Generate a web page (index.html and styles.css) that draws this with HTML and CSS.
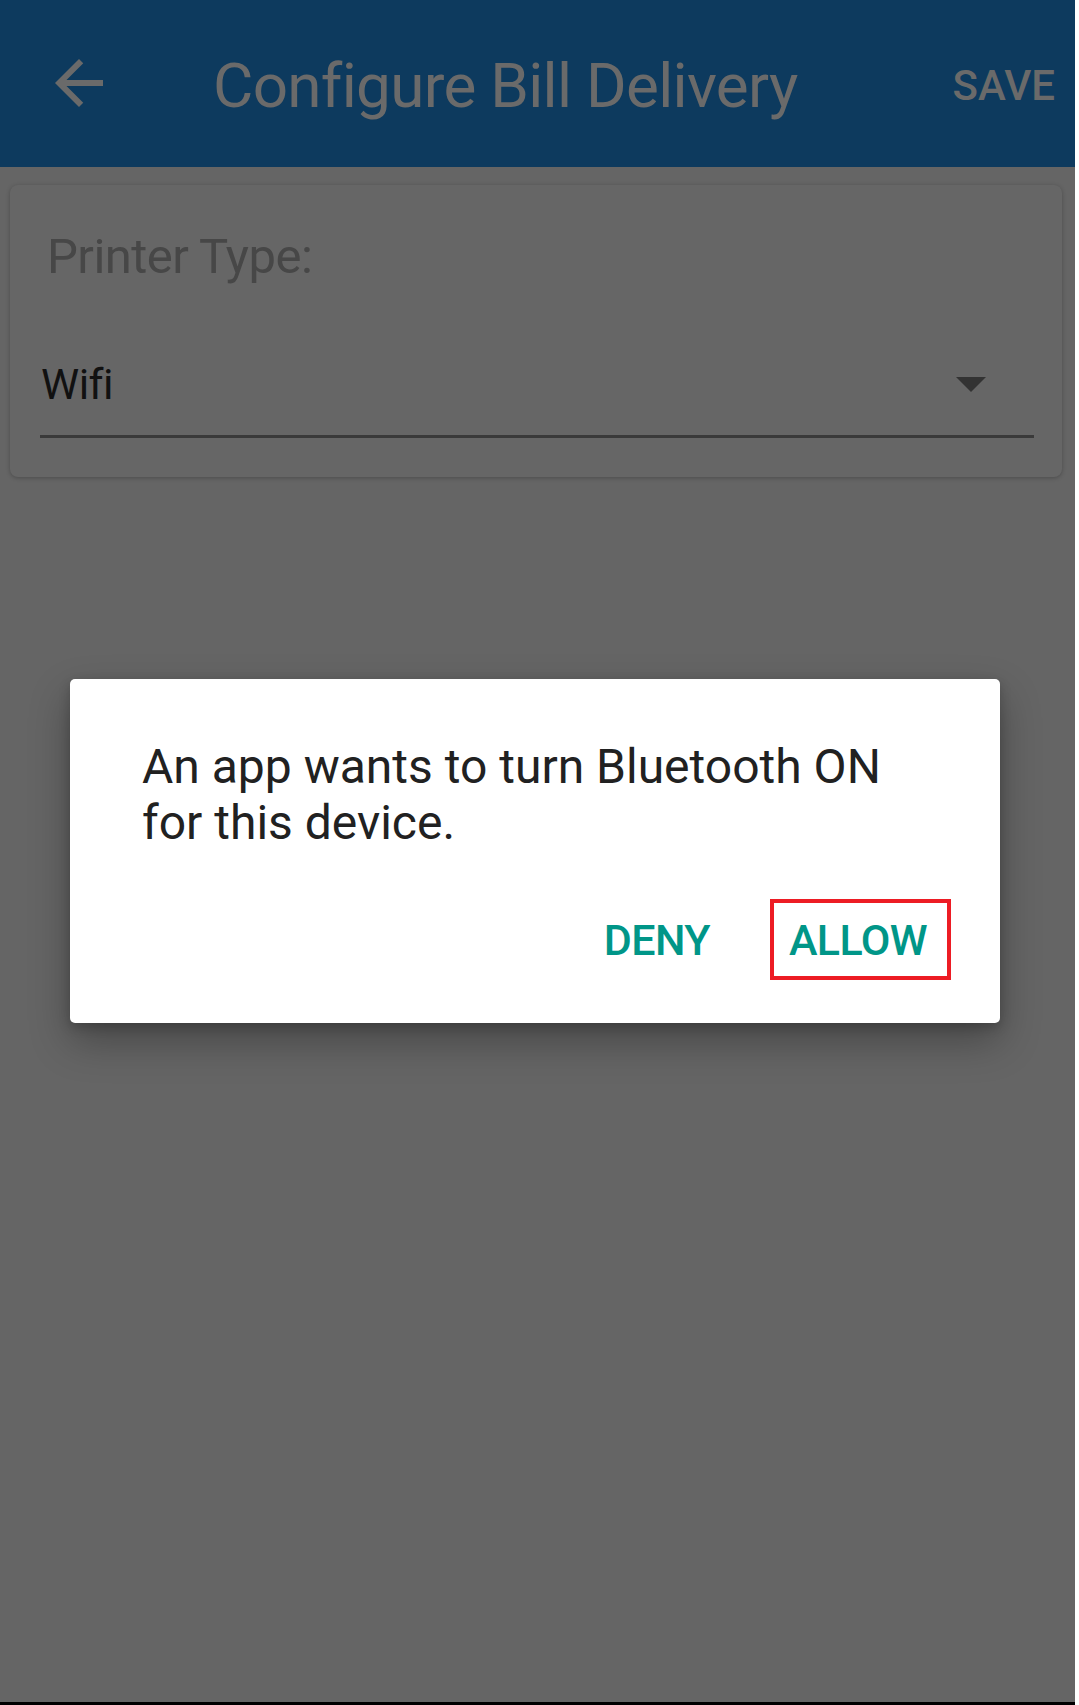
FILE: index.html
```html
<!DOCTYPE html>
<html lang="en">
<head>
<meta charset="utf-8">
<title>Configure Bill Delivery</title>
<link rel="stylesheet" href="styles.css">
</head>
<body>
<div class="screen">
  <header class="appbar">
    <svg class="back" viewBox="0 0 24 24" width="72" height="72" aria-hidden="true">
      <path d="M20 11H7.83l5.59-5.59L12 4l-8 8 8 8 1.41-1.41L7.83 13H20v-2z" fill="#6a6a6a"/>
    </svg>
    <h1 class="title">Configure Bill Delivery</h1>
    <span class="save">SAVE</span>
  </header>
  <main class="content">
    <section class="card">
      <div class="label">Printer Type:</div>
      <div class="select">
        <span class="value">Wifi</span>
        <span class="caret"></span>
      </div>
    </section>
  </main>
  <div class="dialog">
    <p class="message">An app wants to turn Bluetooth ON for this device.</p>
    <div class="actions">
      <span class="btn">DENY</span>
      <span class="btn btn-hl">ALLOW</span>
    </div>
  </div>
</div>
</body>
</html>
```

FILE: styles.css
```css
html, body {
  margin: 0;
  padding: 0;
  background: #ffffff;
}
body {
  font-family: Roboto, "Liberation Sans", sans-serif;
}
.screen {
  position: relative;
  width: 1075px;
  height: 1702px;
  background: #656565;
  border-bottom: 3px solid #000;
  display: flex;
  flex-direction: column;
  overflow: hidden;
}
.appbar {
  height: 167px;
  box-sizing: border-box;
  background: #0d3a5e;
  display: flex;
  align-items: center;
  padding: 4px 20px 0 43px;
  flex-shrink: 0;
}
.back {
  display: block;
  margin-top: -5px;
  flex-shrink: 0;
}
.title {
  margin: 0 0 0 98px;
  font-weight: 400;
  font-size: 62px;
  line-height: 73px;
  letter-spacing: -0.7px;
  color: #6a6a6a;
  flex: 1;
  white-space: nowrap;
}
.save {
  font-size: 42px;
  font-weight: 500;
  color: #6a6a6a;
  line-height: 50px;
}
.content {
  padding: 18px 13px 0 10px;
}
.card {
  background: #666666;
  border-radius: 8px;
  box-shadow: 0 1px 4px rgba(0, 0, 0, 0.25);
  padding: 44px 28px 40px 30px;
  height: 292px;
  box-sizing: border-box;
}
.label {
  font-size: 49px;
  line-height: 56px;
  letter-spacing: -0.55px;
  color: #474747;
  padding-left: 7px;
}
.select {
  margin-top: 73px;
  display: flex;
  align-items: center;
  justify-content: space-between;
  border-bottom: 3px solid #3a3a3a;
  padding: 0 48px 25px 1px;
}
.value {
  font-size: 43px;
  line-height: 52px;
  letter-spacing: -0.5px;
  color: #111111;
}
.caret {
  width: 0;
  height: 0;
  border-left: 15px solid transparent;
  border-right: 15px solid transparent;
  border-top: 15px solid #333333;
}
.dialog {
  position: absolute;
  left: 70px;
  top: 679px;
  width: 930px;
  height: 344px;
  box-sizing: border-box;
  background: #ffffff;
  border-radius: 5px;
  box-shadow: 0 18px 40px rgba(0, 0, 0, 0.3), 0 4px 12px rgba(0, 0, 0, 0.2);
  padding: 60px 49px 0 72px;
}
.message {
  margin: 0;
  font-size: 48px;
  line-height: 56px;
  color: #212121;
  width: 760px;
}
.actions {
  display: flex;
  justify-content: flex-end;
  align-items: center;
  gap: 60px;
  margin-top: 48px;
}
.btn {
  font-size: 43px;
  font-weight: 500;
  letter-spacing: -0.6px;
  color: #009688;
  line-height: 71px;
  border: 4px solid transparent;
  padding: 2px 20px 0 15px;
  margin-right: -24px;
}
.btn-hl {
  border-color: #ed1c24;
  margin-right: 0;
}
```
